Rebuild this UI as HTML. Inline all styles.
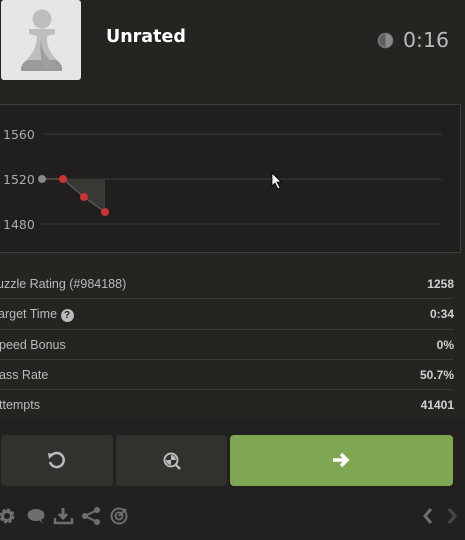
<!DOCTYPE html>
<html><head><meta charset="utf-8"><style>
*{margin:0;padding:0;box-sizing:border-box}
body{width:465px;height:540px;overflow:hidden;background:#262421;font-family:"Liberation Sans",sans-serif;position:relative;color:#bababa}
.a{position:absolute}
.row{position:absolute;left:0;width:454px;height:30px;border-bottom:1px solid #3a3835;font-size:12.5px;color:#bababa}
.row span{position:absolute;top:8px}
.row b{position:absolute;right:0;top:8px;font-size:12px;color:#d0d0d0}
</style></head><body>
<div class="a" style="left:1px;top:0;width:80px;height:80px;background:#e6e6e5;border-radius:3px"></div>
<svg class="a" style="left:1px;top:0" width="80" height="80" viewBox="0 0 80 80">
<circle cx="41" cy="19" r="9.5" fill="#bdbdbc"/>
<path d="M28 29 L54 29 L54 34 L46 36 Q45 50 56 60 Q62 66 61 71 L20 71 Q19 66 25 60 Q36 50 36 36 L28 34 Z" fill="#bdbdbc"/>
<path d="M20 71 Q19 64 27 60 L55 60 Q62 64 61 71 Z" fill="#9a9a99"/>
<path d="M40 38 Q40 52 50 61 L55 68 L43 68 Q38 56 40 38Z" fill="#9f9f9e"/>
</svg>
<div class="a" style="left:106px;top:27px;font-family:'DejaVu Sans',sans-serif;font-size:17.5px;font-weight:bold;color:#fff">Unrated</div>
<svg class="a" style="left:377px;top:32px" width="17" height="17" viewBox="0 0 17 17"><circle cx="8.5" cy="8.5" r="7" fill="#5e5e5e" stroke="#7a7a7a" stroke-width="1.5"/><path d="M8.5 2 A6.5 6.5 0 0 1 8.5 15Z" fill="#8a8a8a"/></svg>
<div class="a" style="left:403px;top:28px;font-family:'DejaVu Sans',sans-serif;font-size:20.5px;color:#bababa">0:16</div>
<div class="a" style="left:-2px;top:104px;width:463px;height:149px;border:1px solid #3f3d3a;background:#211f1d"></div>
<svg class="a" style="left:0;top:104px" width="460" height="149">
<line x1="42" y1="30" x2="442" y2="30" stroke="#3a3836"/>
<line x1="42" y1="75" x2="442" y2="75" stroke="#3a3836"/>
<line x1="42" y1="120" x2="442" y2="120" stroke="#3a3836"/>
<text x="3" y="35" font-size="12.5" fill="#aaa" font-family="DejaVu Sans">1560</text>
<text x="3" y="80" font-size="12.5" fill="#aaa" font-family="DejaVu Sans">1520</text>
<text x="3" y="125" font-size="12.5" fill="#aaa" font-family="DejaVu Sans">1480</text>
<path d="M63 75 L105 75 L105 108 Z" fill="#3a3835"/>
<polyline points="42,75 63,75 84,93 105,108" fill="none" stroke="#555" stroke-width="1.5"/>
<circle cx="42" cy="75" r="4" fill="#888"/>
<circle cx="63" cy="75" r="4" fill="#c33"/>
<circle cx="84" cy="93" r="4" fill="#c33"/>
<circle cx="105" cy="108" r="4" fill="#c33"/>
</svg>
<svg class="a" style="left:271px;top:172px" width="12" height="18"><path d="M1 1 L1 14 L4 11 L7 17 L9 16 L6 10 L10 10 Z" fill="#fff" stroke="#000" stroke-width="0.8"/></svg>
<div class="row" style="top:269px;height:30px"><span style="left:-3px">uzzle Rating (#984188)</span><b>1258</b></div>
<div class="row" style="top:299px;height:31px"><span style="left:-2px">arget Time <span style="position:static;display:inline-block;width:13px;height:13px;border-radius:50%;background:#bababa;color:#262421;font-size:10px;text-align:center;line-height:13px;font-weight:bold;vertical-align:0">?</span></span><b>0:34</b></div>
<div class="row" style="top:330px"><span style="left:-1px">peed Bonus</span><b>0%</b></div>
<div class="row" style="top:360px"><span style="left:-1px">ass Rate</span><b>50.7%</b></div>
<div class="row" style="top:390px;border:none"><span style="left:-1px">ttempts</span><b>41401</b></div>
<div class="a" style="left:0;top:418px;width:465px;height:122px;background:#22211f"></div>
<div class="a" style="left:1px;top:435px;width:112px;height:51px;background:#33312e;border-radius:4px"></div>
<div class="a" style="left:116px;top:435px;width:111px;height:51px;background:#33312e;border-radius:4px"></div>
<div class="a" style="left:230px;top:435px;width:223px;height:51px;background:#7fa650;border-radius:4px"></div>
<svg class="a" style="left:46px;top:450px" width="20" height="20" viewBox="0 0 20 20"><path d="M5 6 A7 7 0 1 1 4 12" fill="none" stroke="#bababa" stroke-width="2.5"/><path d="M2 3 L8 4 L3 9Z" fill="#bababa"/></svg>
<svg class="a" style="left:161px;top:450px" width="22" height="22" viewBox="0 0 22 22"><circle cx="10" cy="10" r="6.5" fill="none" stroke="#bababa" stroke-width="2"/><path d="M10 5 A5 5 0 0 1 15 10 L10 10Z M10 10 L10 15 A5 5 0 0 1 5 10Z" fill="#bababa"/><line x1="15" y1="15" x2="19" y2="19" stroke="#bababa" stroke-width="2.5"/></svg>
<svg class="a" style="left:331px;top:450px" width="20" height="20" viewBox="0 0 20 20"><path d="M2 10 H15 M10 4 L16 10 L10 16" fill="none" stroke="#fff" stroke-width="3.5"/></svg>
<svg class="a" style="left:0;top:505px" width="135" height="22" viewBox="0 0 135 22">
<circle cx="7" cy="11" r="6" fill="none" stroke="#6e6e6e" stroke-width="3" stroke-dasharray="3 1.7"/><circle cx="7" cy="11" r="4.5" fill="none" stroke="#6e6e6e" stroke-width="3"/>
<ellipse cx="36" cy="10" rx="8.5" ry="6" fill="#6e6e6e"/><path d="M38 14 L43 19 L40 13Z" fill="#6e6e6e"/>
<path d="M55 13 V18 H72 V13" fill="none" stroke="#6e6e6e" stroke-width="2.5"/><path d="M63 3 V13 M59 9 L63 13 L67 9" fill="none" stroke="#6e6e6e" stroke-width="3"/>
<path d="M97 5 L85 11 L97 17" fill="none" stroke="#6e6e6e" stroke-width="2"/><circle cx="97" cy="5" r="3" fill="#6e6e6e"/><circle cx="85" cy="11" r="3" fill="#6e6e6e"/><circle cx="97" cy="17" r="3" fill="#6e6e6e"/>
<circle cx="119" cy="11" r="7.5" fill="none" stroke="#6e6e6e" stroke-width="2"/><circle cx="119" cy="11" r="3.5" fill="none" stroke="#6e6e6e" stroke-width="2"/><path d="M119 11 L126 4" stroke="#6e6e6e" stroke-width="2"/>
</svg>
<svg class="a" style="left:418px;top:506px" width="47" height="20" viewBox="0 0 47 20"><path d="M13 3 L7 10 L13 17" fill="none" stroke="#6e6e6e" stroke-width="3"/><path d="M31 3 L37 10 L31 17" fill="none" stroke="#4a4946" stroke-width="3"/></svg>
</body></html>
